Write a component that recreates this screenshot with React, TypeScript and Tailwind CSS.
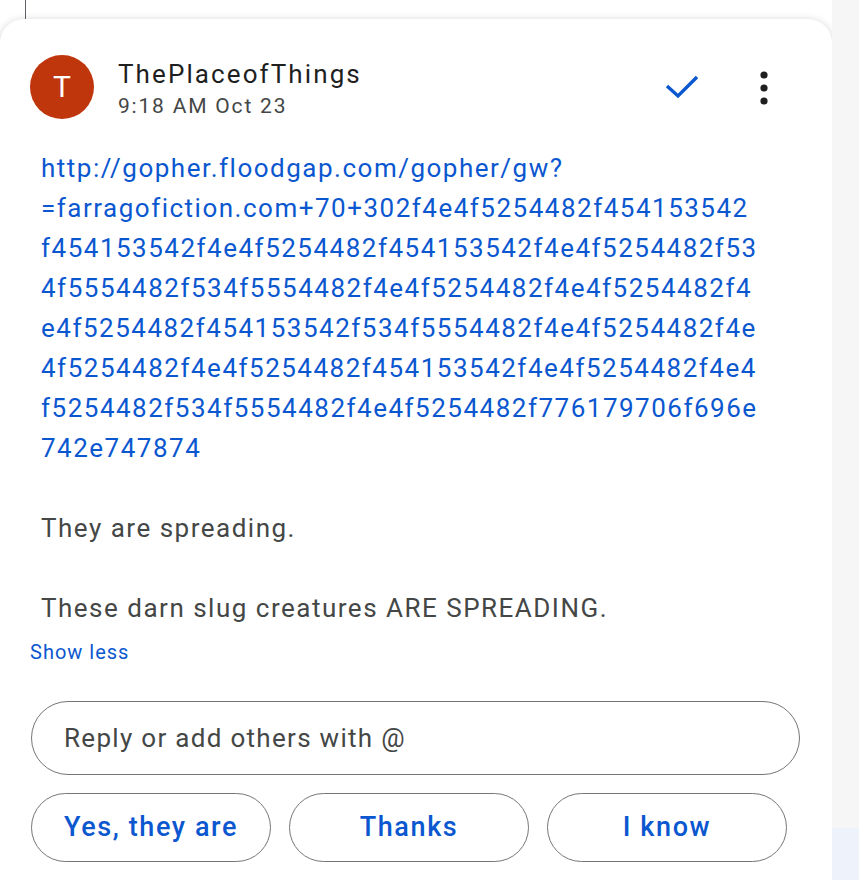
import React from "react";

const linkLines = [
    "http://gopher.floodgap.com/gopher/gw?",
    "=farragofiction.com+70+302f4e4f5254482f454153542",
    "f454153542f4e4f5254482f454153542f4e4f5254482f53",
    "4f5554482f534f5554482f4e4f5254482f4e4f5254482f4",
    "e4f5254482f454153542f534f5554482f4e4f5254482f4e",
    "4f5254482f4e4f5254482f454153542f4e4f5254482f4e4",
    "f5254482f534f5554482f4e4f5254482f776179706f696e",
    "742e747874",
];

const quickReplies = ["Yes, they are", "Thanks", "I know"];

export default function App() {
    return (
        <div
            className="flex w-[859px] h-[880px] overflow-hidden bg-white"
            style={{ fontFamily: "Roboto, 'Noto Sans', sans-serif" }}
        >
            <div className="flex flex-col w-[832px] shrink-0">
                <div className="ml-[25px] w-px h-[19px] shrink-0 bg-[#5f6368]" />
                {/* Comment card */}
                <div className="flex-1 rounded-t-[24px] bg-white shadow-[0_1px_8px_rgba(0,0,0,0.18)] pl-[30px] pr-[32px] pt-[36px]">
                    {/* Header */}
                    <div className="flex items-start">
                        <div className="w-[64px] h-[64px] rounded-full bg-[#bf360c] flex items-center justify-center text-white text-[30px] leading-none">
                            T
                        </div>
                        <div className="ml-[24px] mt-[4px] flex flex-col">
                            <span className="text-[26px] leading-[30px] text-[#1f1f1f] tracking-[2.1px]">ThePlaceofThings</span>
                            <span className="mt-[4px] text-[21px] leading-[26px] text-[#444746] tracking-[1.8px]">9:18 AM Oct 23</span>
                        </div>
                        <div className="ml-auto flex items-center mt-[16px]">
                            <svg width="36" height="28" viewBox="0 0 36 28" className="mr-[60px]">
                                <polyline points="3,12 14,22 33,3" fill="none" stroke="#0b57d0" strokeWidth="3.4" />
                            </svg>
                            <svg width="8" height="34" viewBox="0 0 8 34" className="mr-[32px]">
                                <circle cx="4" cy="4" r="3.6" fill="#1f1f1f" />
                                <circle cx="4" cy="17" r="3.6" fill="#1f1f1f" />
                                <circle cx="4" cy="30" r="3.6" fill="#1f1f1f" />
                            </svg>
                        </div>
                    </div>

                    {/* Body */}
                    <div className="pl-[11px] mt-[29px] text-[26px] leading-[40px] tracking-[1.5px]">
                        <div className="text-[#0b57d0]">
                            {linkLines.map((line, i) => (
                                <div key={i} className="whitespace-nowrap">{line}</div>
                            ))}
                        </div>
                        <div className="h-[40px]" />
                        <div className="text-[#444746]">They are spreading.</div>
                        <div className="h-[40px]" />
                        <div className="text-[#444746]">These darn slug creatures ARE SPREADING.</div>
                    </div>
                    <div className="mt-[12px] text-[20px] leading-[24px] tracking-[1px] text-[#0b57d0]">Show less</div>

                    {/* Reply box */}
                    <div className="mt-[37px] ml-px w-[769px] h-[74px] rounded-full border-[1.5px] border-[#747775] flex items-center pl-[32px] text-[26px] tracking-[1.3px] text-[#444746]">
                        Reply or add others with @
                    </div>

                    {/* Smart replies */}
                    <div className="mt-[18px] ml-px flex gap-[18px]">
                        {quickReplies.map((label) => (
                            <div
                                key={label}
                                className="w-[240px] h-[69px] rounded-full border-[1.5px] border-[#747775] flex items-center justify-center text-[27px] font-medium tracking-[1.6px] text-[#0b57d0]"
                            >
                                {label}
                            </div>
                        ))}
                    </div>
                </div>
            </div>
            <div className="flex flex-col flex-1">
                <div className="h-[828px] bg-[#f6f6f6]" />
                <div className="flex-1 bg-[#eef2fb]" />
            </div>
        </div>
    );
}
